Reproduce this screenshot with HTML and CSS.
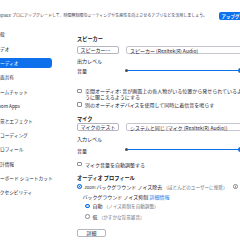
FILE: index.html
```html
<!DOCTYPE html>
<html lang="ja">
<head>
<meta charset="utf-8">
<title>設定 - オーディオ</title>
<link rel="stylesheet" href="styles.css">
</head>
<body>
<div class="banner">
  <p class="banner-text">Zoom Workplace プロにアップグレードして、時間無制限のミーティングや生産性を向上させるアプリなどを活用しましょう。</p>
  <button class="upgrade">アップグレード</button>
</div>
<div class="app">
  <nav class="sidebar">
    <a class="nav-item">一般</a>
    <a class="nav-item">ビデオ</a>
    <a class="nav-item active">オーディオ</a>
    <a class="nav-item">画面共有</a>
    <a class="nav-item">チームチャット</a>
    <a class="nav-item">Zoom Apps</a>
    <a class="nav-item">背景とエフェクト</a>
    <a class="nav-item">レコーディング</a>
    <a class="nav-item">プロフィール</a>
    <a class="nav-item">統計情報</a>
    <a class="nav-item">キーボード ショートカット</a>
    <a class="nav-item">アクセシビリティ</a>
  </nav>
  <main class="content">
    <h2 class="heading">スピーカー</h2>
    <div class="device-row">
      <button class="btn">スピーカーのテスト</button>
      <div class="select">スピーカー (Realtek(R) Audio)</div>
    </div>
    <p class="label">出力レベル</p>
    <div class="level-row">
      <span>音量</span>
      <div class="slider"><span class="slider-end"></span><span class="slider-thumb"></span></div>
    </div>
    <label class="check check--spatial"><span class="box"></span><span class="check-text">空間オーディオ: 音が画面上の各人物がいる位置から発せられているように聞こえるようにする</span></label>
    <label class="check check--ring"><span class="box"></span><span class="check-text">別のオーディオデバイスを使用して同時に着信音を鳴らす</span></label>

    <h2 class="heading heading--mic">マイク</h2>
    <div class="device-row device-row--mic">
      <button class="btn btn--center">マイクのテスト</button>
      <div class="select">システムと同じ (マイク (Realtek(R) Audio))</div>
    </div>
    <p class="label label--mic">入力レベル</p>
    <div class="level-row level-row--mic">
      <span>音量</span>
      <div class="slider"><span class="slider-end"></span><span class="slider-thumb"></span></div>
    </div>
    <label class="check check--auto"><span class="box"></span><span class="check-text">マイク音量を自動調整する</span></label>

    <h2 class="heading heading--profile">オーディオ プロフィール</h2>
    <div class="option option--zoom"><span class="radio on"></span><span><span class="small-latin">Zoom</span> バックグラウンド ノイズ除去 <span class="note">（ほとんどのユーザーに推奨）</span></span><svg class="info" viewBox="0 0 10 10" width="5" height="5"><circle cx="5" cy="5" r="4.2" fill="none" stroke="#39394d" stroke-width="1.1"/><rect x="4.45" y="4.2" width="1.1" height="3.4" fill="#39394d"/><circle cx="5" cy="2.9" r="0.65" fill="#39394d"/></svg></div>
    <div class="sub-label">バックグラウンド ノイズ抑制 <a class="link">詳細情報</a></div>
    <div class="option option--sub"><span class="radio on"></span><span>自動 <span class="note">（ノイズ抑制を自動調整）</span></span></div>
    <div class="option option--sub"><span class="radio"></span><span>低 <span class="note">（かすかな背景雑音）</span></span></div>
    <button class="btn btn--center btn--detail">詳細</button>
  </main>
</div>
</body>
</html>
```
FILE: styles.css
```css
html, body {
  margin: 0;
  height: 240px;
  overflow: hidden;
  background: #ffffff;
}
body {
  font-family: "Noto Sans CJK JP", "Noto Sans", sans-serif;
  color: #232333;
  font-size: 5px;
  line-height: 7px;
}
p, h2 { margin: 0; }

.banner {
  display: flex;
  align-items: center;
  height: 23px;
  padding-top: 4px;
  margin-right: -16px;
}
.banner-text {
  margin-left: -20.5px;
  font-size: 4px;
  white-space: nowrap;
  color: #39394d;
}
.upgrade {
  margin-left: auto;
  height: 8px;
  padding: 0 3px;
  border: 0;
  border-radius: 2px;
  background: #0e72ed;
  color: #ffffff;
  font: bold 4.5px/8px "Noto Sans CJK JP", sans-serif;
  white-space: nowrap;
}

.app {
  display: flex;
  margin-left: -20px;
  margin-right: -20px;
}
.sidebar {
  flex: none;
  width: 97px;
  display: flex;
  flex-direction: column;
  gap: 4.4px;
  padding-top: 2.2px;
}
.nav-item {
  box-sizing: border-box;
  height: 10px;
  width: 68px;
  margin-left: 4px;
  padding-left: 11.3px;
  line-height: 10px;
  font-size: 4.7px;
  white-space: nowrap;
  border-radius: 3px;
  color: #232333;
}
.nav-item.active {
  background: #0e71eb;
  color: #ffffff;
}

.content {
  flex: 1;
  padding-top: 7.5px;
}
.heading {
  font-size: 5.2px;
  font-weight: bold;
  line-height: 7px;
  color: #131619;
}
.heading--mic { margin-top: 7px; }
.heading--profile { margin-top: 6.5px; }

.device-row {
  display: grid;
  grid-template-columns: 42px 1fr;
  column-gap: 7px;
  margin-top: 4px;
}
.device-row--mic { margin-top: 0.5px; }
.btn {
  box-sizing: border-box;
  height: 8px;
  padding: 0 2.5px;
  border: 0.8px solid #b5b5bf;
  border-radius: 2px;
  background: #ffffff;
  color: #232333;
  font: 5px/6px "Noto Sans CJK JP", sans-serif;
  text-align: left;
  white-space: nowrap;
  overflow: hidden;
  text-overflow: ellipsis;
}
.btn--center { text-align: center; }
.btn--detail {
  display: block;
  width: 29px;
  margin-top: 8.5px;
}
.select {
  box-sizing: border-box;
  height: 8.5px;
  padding-left: 3px;
  border: 0.8px solid #c6c6d0;
  border-radius: 2px;
  line-height: 7px;
  white-space: nowrap;
}

.label { margin-top: 3px; }
.label--mic { margin-top: 3.5px; }

.level-row {
  display: grid;
  grid-template-columns: 42px 114px;
  column-gap: 7px;
  align-items: center;
  height: 7px;
  margin-top: 3px;
}
.level-row--mic { margin-top: 5px; }
.slider {
  position: relative;
  height: 1px;
  margin-top: -1px;
  background: #0e71eb;
}
.slider-end {
  position: absolute;
  left: -1px;
  top: -1px;
  width: 3px;
  height: 3px;
  border-radius: 50%;
  background: #4a4f5a;
}
.slider-thumb {
  position: absolute;
  right: -2.5px;
  top: -2px;
  width: 5px;
  height: 5px;
  border-radius: 50%;
  background: #0e71eb;
}

.check {
  display: flex;
  align-items: flex-start;
  gap: 3.5px;
}
.check--spatial { margin-top: 14px; line-height: 6px; }
.check--spatial .check-text { width: 160px; }
.check--spatial .box { margin-top: 0.8px; }
.check--ring { margin-top: 1px; }
.check--auto { margin-top: 7px; }
.box {
  flex: none;
  box-sizing: border-box;
  width: 4.5px;
  height: 4.5px;
  margin-top: 1.2px;
  border: 0.8px solid #8b8b99;
  border-radius: 1px;
  background: #ffffff;
}

.option {
  display: flex;
  align-items: center;
  gap: 3px;
  white-space: nowrap;
  margin-top: 2.5px;
}
.option--zoom { margin-top: 1.5px; }
.option--sub { padding-left: 8px; }
.radio {
  flex: none;
  box-sizing: border-box;
  width: 4.5px;
  height: 4.5px;
  border: 0.8px solid #8b8b99;
  border-radius: 50%;
  background: #ffffff;
}
.radio.on {
  border: 1px solid #0e71eb;
  background: #0e71eb;
  box-shadow: inset 0 0 0 0.8px #ffffff;
}
.small-latin { font-size: 4px; }
.note {
  font-size: 4.6px;
  color: #6e7680;
}
.info { flex: none; margin-left: 3px; }
.sub-label {
  margin-top: 2px;
  padding-left: 5.5px;
  white-space: nowrap;
}
.link { color: #0e71eb; }
```
